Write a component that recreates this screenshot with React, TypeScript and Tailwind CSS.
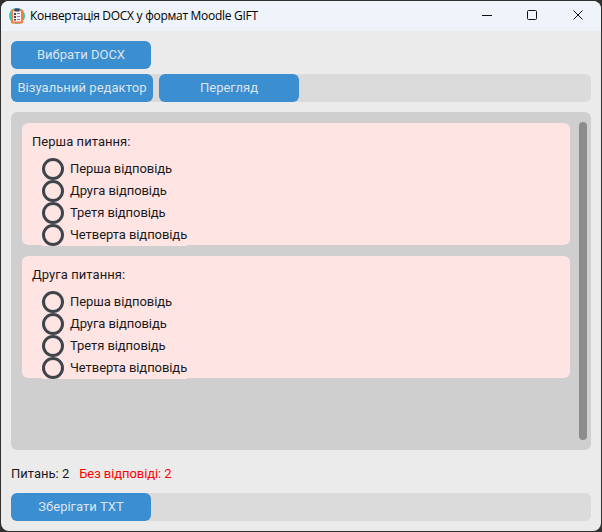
import React from 'react';

const answers = ['Перша відповідь', 'Друга відповідь', 'Третя відповідь', 'Четверта відповідь'];

function Button({ children, className = 'w-[140px]' }: { children: React.ReactNode; className?: string }) {
  return (
    <button className={`h-7 shrink-0 whitespace-nowrap rounded-md bg-[#3b8ed0] pb-px text-center text-[#dce4ee] ${className}`}>
      {children}
    </button>
  );
}

function Question({ title }: { title: string }) {
  return (
    <section className="h-[122px] rounded-md bg-[#ffe4e4] pt-[9px]">
      <h2 className="ml-[10px] h-[26px] leading-[19px] tracking-[0.05px]">{title}</h2>
      <div className="ml-5 flex w-[145px] flex-col bg-[#ffe4e4] tracking-[-0.07px]">
        {answers.map((answer) => (
          <label key={answer} className="flex h-[22px] items-center gap-[6px] whitespace-nowrap">
            <span className="size-[22px] shrink-0 rounded-full border-[3px] border-[#3e454a]" />
            {answer}
          </label>
        ))}
      </div>
    </section>
  );
}

function ClipboardLogo() {
  return (
    <svg width="16" height="16" viewBox="0 0 16 16">
      <circle cx="8" cy="8" r="8" fill="#3cc4b4" />
      <rect x="2" y="1.5" width="12" height="14" rx="1" fill="#f08040" />
      <path d="M4 3h8v10.5H4z" fill="#f4f1f5" />
      <path d="M5.5 0.5h5v3h-5z" fill="#344864" />
      <path d="M5 5h2v2H5zM5 8h2v2H5zM5 11h2v1.5H5z" fill="#4b4268" />
      <path d="M8 5.5h3M8 8.5h3M8 11.5h3" stroke="#8d849e" />
    </svg>
  );
}

export default function App() {
  return (
    <div className="h-[532px] w-[602px] overflow-hidden bg-[#303030] p-px font-['Roboto',sans-serif] text-[13px] text-[#1a1a1a]">
      <main className="flex h-[530px] flex-col overflow-hidden rounded-lg bg-[#ebebeb]">
        <header className="flex h-[30px] shrink-0 items-center bg-[#eef4f9] pb-px pl-2 text-black">
          <ClipboardLogo />
          <h1 className="ml-[5px] mt-px whitespace-nowrap font-['Open_Sans',sans-serif] text-[12px] tracking-[-0.28px]">
            Конвертація DOCX у формат Moodle GIFT
          </h1>
          <svg className="ml-auto mr-[17px]" width="102" height="11" viewBox="0 0 102 11" fill="none" stroke="#111">
            <path d="M0 5.5h10" />
            <rect x="45.5" y="0.5" width="9" height="9" rx="1" />
            <path d="m91.5 0.5 9 9m0-9-9 9" />
          </svg>
        </header>
        <div className="flex flex-col px-[10px] pt-[10px]">
          <Button>Вибрати DOCX</Button>
          <nav className="mt-[5px] flex h-7 gap-[6px] rounded-md bg-[#dbdbdb]">
            <Button className="w-[142px] tracking-[0.05px]">Візуальний редактор</Button>
            <Button>Перегляд</Button>
          </nav>
          <div className="mt-[10px] flex h-[338px] rounded-md bg-[#cfcfcf] pl-[11px] pr-1">
            <div className="flex w-[548px] flex-col gap-[11px] pt-[11px]">
              <Question title="Перша питання:" />
              <Question title="Друга питання:" />
            </div>
            <div className="ml-auto mt-[10px] h-[318px] w-2 rounded bg-[#8c8c8c]" />
          </div>
          <div className="mt-[10px] flex h-7 items-center gap-[10px]">
            <span>Питань: 2</span>
            <span className="tracking-[-0.08px] text-[#ff0000]">Без відповіді: 2</span>
          </div>
          <footer className="mt-[5px] flex h-7 rounded-md bg-[#dbdbdb]">
            <Button>Зберігати TXT</Button>
          </footer>
        </div>
      </main>
    </div>
  );
}
